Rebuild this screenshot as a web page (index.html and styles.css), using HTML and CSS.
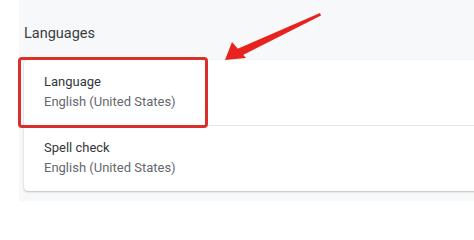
FILE: index.html
```html
<!DOCTYPE html>
<html>
<head>
<meta charset="utf-8">
<link rel="stylesheet" href="styles.css">
</head>
<body>
<div class="page">
  <main class="main">
    <h2 class="section-title">Languages</h2>
    <div class="card">
      <div class="row">
        <div class="row-label">Language</div>
        <div class="row-sub">English (United States)</div>
      </div>
      <div class="row">
        <div class="row-label">Spell check</div>
        <div class="row-sub">English (United States)</div>
      </div>
    </div>
  </main>
  <div class="highlight"></div>
  <svg class="arrow" width="474" height="201" viewBox="0 0 474 201">
    <polygon points="320,13 321,15.5 241,56 236,49.5" fill="#e8231f"/>
    <polygon points="225,60 232,42 246,58" fill="#e8231f"/>
  </svg>
</div>
</body>
</html>
```
FILE: styles.css
```css
html, body {
  margin: 0;
  padding: 0;
  background: #ffffff;
}
.page {
  position: relative;
  width: 474px;
  height: 201px;
  overflow: hidden;
  font-family: Roboto, "Liberation Sans", sans-serif;
}
.main {
  margin-left: 19px;
  height: 201px;
  background: #f7f8fa;
  padding-left: 5px;
  padding-top: 24px;
  box-sizing: border-box;
}
.section-title {
  margin: 0 0 16px 0;
  font-size: 14.5px;
  font-weight: 400;
  line-height: 20px;
  color: #3a3c3f;
}
.card {
  background: #ffffff;
  border-radius: 4px;
  margin-right: -10px;
  box-shadow: 0 1px 2px rgba(60, 64, 67, 0.3), 0 0 1px rgba(60, 64, 67, 0.15);
}
.row {
  padding: 12px 20px 13px 20px;
  height: 40px;
}
.row + .row {
  border-top: 1px solid #e6e7e9;
}
.row-label {
  font-size: 13px;
  line-height: 20px;
  color: #34373a;
}
.row-sub {
  font-size: 13px;
  line-height: 20px;
  color: #65686c;
}
.highlight {
  position: absolute;
  left: 18px;
  top: 57px;
  width: 184px;
  height: 65px;
  border: 3px solid #d9302b;
  border-radius: 4px;
}
.arrow {
  position: absolute;
  left: 0;
  top: 0;
}
```
